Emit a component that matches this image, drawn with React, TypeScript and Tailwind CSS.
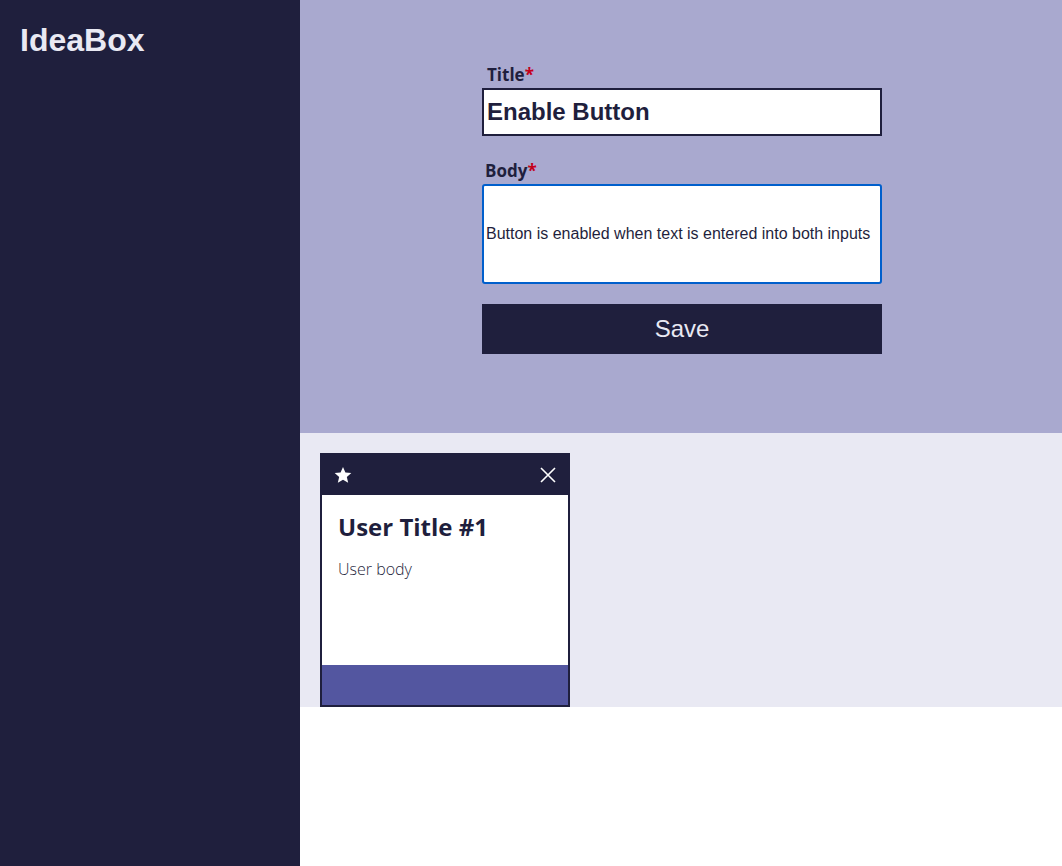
import React from "react";

export default function App() {
  return (
    <div className="flex min-h-[866px] w-full bg-white" style={{ fontFamily: '"Open Sans", sans-serif' }}>
      <aside className="w-[300px] shrink-0 bg-[#1f1f3d] min-h-[866px] pt-[22px] pl-[20px]">
        <h1 className="text-[32px] leading-[36px] font-bold text-[#e9e9f3]" style={{ fontFamily: '"Liberation Sans", Arial, sans-serif' }}>
          IdeaBox
        </h1>
      </aside>
      <main className="flex-1 flex flex-col">
        <section className="h-[433px] bg-[#a9a9cf] flex justify-center pt-[64px] pl-[2px]">
          <form className="w-[400px] flex flex-col">
            <label className="text-[17px] leading-[22px] font-bold text-[#1f1f3d] pl-[5px]">
              Title<span className="text-[#c4001a]">*</span>
            </label>
            <input
              defaultValue="Enable Button"
              className="mt-[2px] h-[48px] w-[400px] bg-white border-2 border-[#1f1f3d] px-[3px] text-[24px] font-bold text-[#1f1f3d] outline-none"
              style={{ fontFamily: '"Liberation Sans", Arial, sans-serif' }}
            />
            <label className="mt-[24px] text-[17px] leading-[22px] font-bold text-[#1f1f3d] pl-[3px]">
              Body<span className="text-[#c4001a]">*</span>
            </label>
            <div className="mt-[2px] h-[100px] w-[400px] bg-white border-2 border-[#005fcc] rounded-[3px] flex items-center px-[2px]">
              <span className="text-[16px] text-[#1f1f3d]" style={{ fontFamily: '"Liberation Sans", Arial, sans-serif' }}>
                Button is enabled when text is entered into both inputs
              </span>
            </div>
            <button
              type="button"
              className="mt-[20px] h-[50px] w-[400px] bg-[#1f1f3d] text-[#e9e9f3] text-[24px]"
              style={{ fontFamily: '"Liberation Sans", Arial, sans-serif' }}
            >
              Save
            </button>
          </form>
        </section>
        <section className="h-[274px] bg-[#e9e9f3] pt-[20px] pl-[20px]">
          <article className="w-[250px] h-[254px] border-2 border-[#1f1f3d] flex flex-col">
            <div className="h-[40px] bg-[#1f1f3d] flex items-center justify-between px-[11px]">
              <svg width="20" height="20" viewBox="0 0 24 24" fill="white">
                <path d="M12 2.5l2.9 6.6 7.1.6-5.4 4.7 1.6 7-6.2-3.7-6.2 3.7 1.6-7L2 9.7l7.1-.6z" />
              </svg>
              <svg width="18" height="18" viewBox="0 0 18 18" stroke="white" strokeWidth="1.6" fill="none">
                <path d="M2 2l14 14M16 2L2 16" />
              </svg>
            </div>
            <div className="flex-1 bg-white px-[16px] pt-[16px]">
              <h2 className="text-[24px] leading-[32px] font-bold text-[#1f1f3d]">User Title #1</h2>
              <p className="mt-[15px] text-[16px] leading-[22px] font-light text-[#1f1f3d]">User body</p>
            </div>
            <div className="h-[40px] bg-[#5356a0]" />
          </article>
        </section>
        <div className="flex-1 bg-white" />
      </main>
    </div>
  );
}
